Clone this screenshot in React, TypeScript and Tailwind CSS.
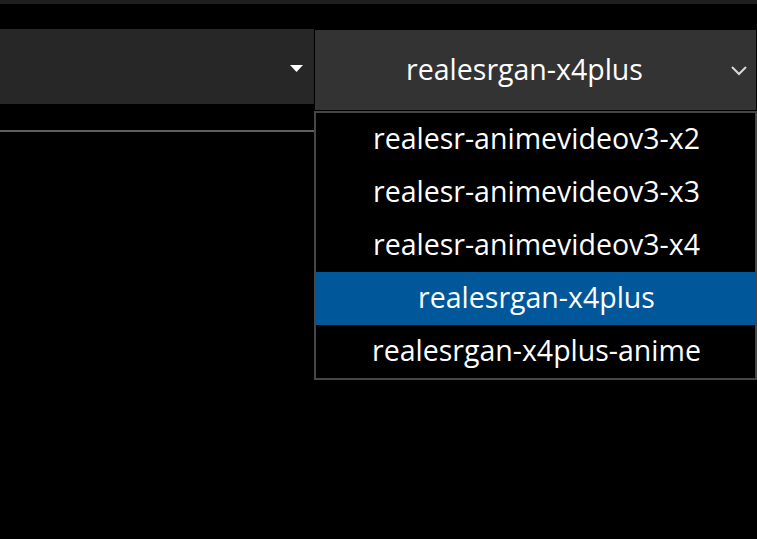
import React from "react";

const models = [
  "realesr-animevideov3-x2",
  "realesr-animevideov3-x3",
  "realesr-animevideov3-x4",
  "realesrgan-x4plus",
  "realesrgan-x4plus-anime",
];

const selected = "realesrgan-x4plus";

const App = () => {
  return (
    <div
      className="relative w-[757px] h-[539px] bg-black overflow-hidden text-white"
      style={{ fontFamily: '"Open Sans", "Noto Sans", sans-serif' }}
    >
      <div className="h-[4px] bg-[#1f1f1f]" />
      <div className="flex mt-[25px]">
        <div className="w-[314px]">
          <div className="h-[75px] bg-[#272727] flex items-center justify-end pr-[10px]">
            <svg width="14" height="8" viewBox="0 0 14 8" className="mt-[5px]">
              <path d="M0 0 H13 L6.5 7 Z" fill="#ffffff" />
            </svg>
          </div>
          <div className="h-[2px] bg-[#5f5f5f] mt-[26px]" />
        </div>
        <div className="ml-[1px] mt-[1px] w-[441px] h-[80px] bg-[#333333] flex items-center">
          <div className="flex-1 text-center text-[28.5px] pl-[4px] pb-[2px]">{selected}</div>
          <svg width="18" height="12" viewBox="0 0 18 12" className="mr-[8px] mt-[2px]">
            <path d="M2 2 L9 9 L16 2" stroke="#d8d8d8" strokeWidth="2" fill="none" />
          </svg>
        </div>
      </div>

      <div className="absolute left-[314px] top-[111px] w-[443px] border-2 border-[#464646] bg-black">
        {models.map((m) => (
          <div
            key={m}
            className={`h-[53px] flex items-center justify-center text-[28.5px] pl-[2px] pb-[2px] ${
              m === selected ? "bg-[#00589b]" : ""
            }`}
          >
            {m}
          </div>
        ))}
      </div>
    </div>
  );
};

export default App;
